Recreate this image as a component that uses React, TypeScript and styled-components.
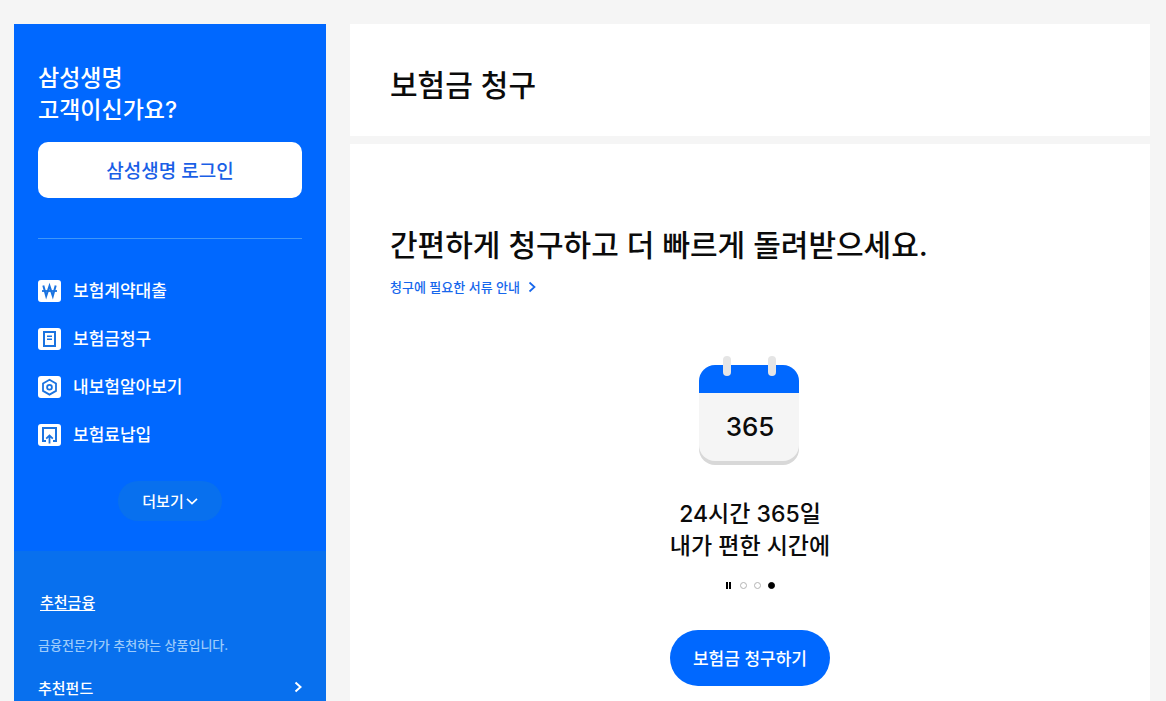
import React from "react";
import styled, { createGlobalStyle } from "styled-components";

const GlobalStyle = createGlobalStyle`
  *, *::before, *::after { box-sizing: border-box; }
  body {
    margin: 0;
    background: #f5f5f5;
    color: #0b0b0b;
    font-family: Inter, "Noto Sans CJK KR", sans-serif;
    font-weight: 500;
  }
  h1, h2, p, ul { margin: 0; padding: 0; font-weight: 500; }
  ul { list-style: none; }
  button { font: inherit; border: 0; padding: 0; cursor: pointer; }
  a { color: inherit; text-decoration: none; }
`;

const Page = styled.div`
  display: flex;
  align-items: stretch;
  gap: 24px;
  min-height: 100vh;
  padding: 24px 16px 0 14px;
`;

const Sidebar = styled.aside`
  flex: 0 0 312px;
  display: flex;
  flex-direction: column;
  background: #0068ff;
  color: #fff;
`;

const MemberArea = styled.section`
  display: flex;
  flex-direction: column;
  padding: 38px 24px 30px;
`;

const Greeting = styled.h2`
  font-size: 23px;
  line-height: 32px;
`;

const LoginButton = styled.button`
  height: 56px;
  margin-top: 16px;
  padding-bottom: 2px;
  border-radius: 10px;
  background: #fff;
  color: #1a5fe6;
  font-size: 19px;
`;

const QuickList = styled.ul`
  margin-top: 40px;
  padding-top: 28px;
  border-top: 1px solid #3f97f8;
`;

const QuickLink = styled.a`
  display: flex;
  align-items: center;
  gap: 12px;
  height: 48px;
  font-size: 17px;
  line-height: 24px;

  svg { flex: none; }
`;

const MoreButton = styled.button`
  display: flex;
  align-items: center;
  justify-content: center;
  gap: 2px;
  align-self: center;
  width: 104px;
  height: 40px;
  margin-top: 22px;
  padding-bottom: 1px;
  border-radius: 20px;
  background: #0870ee;
  color: #fff;
  font-size: 15px;
`;

const Recommend = styled.section`
  flex: 1;
  display: flex;
  flex-direction: column;
  align-items: stretch;
  padding: 40px 24px 0;
  background: #0870ee;
`;

const RecommendTab = styled.a`
  align-self: flex-start;
  margin-left: 2px;
  font-size: 15px;
  line-height: 24px;
  text-decoration: underline;
  text-decoration-thickness: 1px;
  text-underline-offset: 2px;
`;

const RecommendNote = styled.p`
  margin-top: 20px;
  color: #9ccbfb;
  font-size: 13px;
  line-height: 20px;
`;

const RecommendLink = styled.a`
  display: flex;
  align-items: center;
  justify-content: space-between;
  height: 40px;
  margin-top: 12px;
  font-size: 15px;
`;

const Main = styled.main`
  flex: 1;
  min-width: 0;
  display: flex;
  flex-direction: column;
  gap: 8px;
`;

const TitleCard = styled.header`
  padding: 41px 40px 31px;
  background: #fff;
`;

const Heading = styled.h2`
  font-size: 30px;
  line-height: 40px;
`;

const ClaimCard = styled.section`
  flex: 1;
  display: flex;
  flex-direction: column;
  align-items: flex-start;
  padding: 81px 40px 15px;
  background: #fff;
`;

const GuideLink = styled.a`
  display: flex;
  align-items: center;
  gap: 8px;
  margin-top: 12px;
  color: #1767ec;
  font-size: 13px;
  line-height: 20px;
`;

const Slide = styled.div`
  align-self: stretch;
  display: flex;
  flex-direction: column;
  align-items: center;
  margin-top: 59px;
`;

const SlideText = styled.p`
  margin-top: 32px;
  font-size: 23px;
  line-height: 32px;
  text-align: center;
`;

const Pager = styled.div`
  display: flex;
  align-items: center;
  gap: 7px;
  margin-top: 20px;
`;

const PauseButton = styled.button`
  width: 5px;
  height: 7px;
  margin-right: 2px;
  border: solid #000;
  border-width: 0 2px;
  background: none;
`;

const Dot = styled.button<{ $active?: boolean }>`
  width: 7px;
  height: 7px;
  border: 1px solid ${(p) => (p.$active ? "#000" : "#b4b4b4")};
  border-radius: 50%;
  background: ${(p) => (p.$active ? "#000" : "#fff")};
`;

const ClaimButton = styled.button`
  width: 160px;
  height: 56px;
  margin-top: 41px;
  padding-bottom: 2px;
  border-radius: 28px;
  background: #0068ff;
  color: #fff;
  font-size: 17px;
`;

const Tile = ({ children }: { children: React.ReactNode }) => (
  <svg width="23" height="22" viewBox="0 0 23 22" fill="none" aria-hidden="true">
    <rect width="23" height="22" rx="3" fill="#fff" />
    <g stroke="#1a73e0" strokeWidth="2">{children}</g>
  </svg>
);

const WonIcon = () => (
  <Tile>
    <path d="M5.3 5.5 8.2 16 11.5 6 14.8 16 17.7 5.5" />
    <path d="M4 11h15" strokeWidth="1.8" />
  </Tile>
);

const DocumentIcon = () => (
  <Tile>
    <path d="M6 4h11v14H6z" />
    <path d="M9 8.2h5M9 11.2h5" strokeWidth="1.6" />
  </Tile>
);

const HexagonIcon = () => (
  <Tile>
    <path d="M11.5 3.8 18 7.5v7.4l-6.5 3.7L5 14.9V7.5z" strokeWidth="1.8" />
    <circle cx="11.5" cy="11.2" r="2.4" strokeWidth="1.8" />
  </Tile>
);

const PaymentIcon = () => (
  <Tile>
    <path d="M8 17H5V4h13v13h-3" />
    <path d="M11.5 19.5v-8M8.2 14.6l3.3-3.2 3.3 3.2" strokeWidth="1.8" />
  </Tile>
);

const ChevronRight = ({ thick = 1.7 }: { thick?: number }) => (
  <svg width="8" height="12" viewBox="0 0 8 12" fill="none" aria-hidden="true">
    <path d="M1.5 1.5 6.5 6l-5 4.5" stroke="currentColor" strokeWidth={thick} />
  </svg>
);

const ChevronDown = () => (
  <svg width="12" height="8" viewBox="0 0 12 8" fill="none" aria-hidden="true">
    <path d="M1 1.8 6 6.5l5-4.7" stroke="currentColor" strokeWidth="1.7" />
  </svg>
);

const CalendarPicture = () => (
  <svg width="102" height="110" viewBox="0 0 102 110" role="img" aria-label="365">
    <path d="M0 80h100v13a16 16 0 0 1-16 16H16A16 16 0 0 1 0 93z" fill="#d8d8d8" />
    <path d="M0 37h100v52a16 16 0 0 1-16 16H16A16 16 0 0 1 0 89z" fill="#f5f5f5" />
    <path d="M0 37V25A16 16 0 0 1 16 9h68a16 16 0 0 1 16 16v12z" fill="#0068ff" />
    <rect x="24" y="0" width="8" height="20" rx="4" fill="#e5e5e5" />
    <rect x="69" y="0" width="8" height="20" rx="4" fill="#e5e5e5" />
    <text x="51" y="80" fontSize="26" fontWeight="500" textAnchor="middle" fill="#0b0b0b">
      365
    </text>
  </svg>
);

const quickLinks = [
  { label: "보험계약대출", Icon: WonIcon },
  { label: "보험금청구", Icon: DocumentIcon },
  { label: "내보험알아보기", Icon: HexagonIcon },
  { label: "보험료납입", Icon: PaymentIcon },
];

export default function App() {
  return (
    <>
      <GlobalStyle />
      <Page>
        <Sidebar>
          <MemberArea>
            <Greeting>
              삼성생명
              <br />
              고객이신가요?
            </Greeting>
            <LoginButton type="button">삼성생명 로그인</LoginButton>
            <QuickList>
              {quickLinks.map(({ label, Icon }) => (
                <li key={label}>
                  <QuickLink href="#">
                    <Icon />
                    {label}
                  </QuickLink>
                </li>
              ))}
            </QuickList>
            <MoreButton type="button">
              더보기
              <ChevronDown />
            </MoreButton>
          </MemberArea>
          <Recommend>
            <RecommendTab href="#">추천금융</RecommendTab>
            <RecommendNote>금융전문가가 추천하는 상품입니다.</RecommendNote>
            <RecommendLink href="#">
              추천펀드
              <ChevronRight thick={2} />
            </RecommendLink>
          </Recommend>
        </Sidebar>
        <Main>
          <TitleCard>
            <Heading as="h1">보험금 청구</Heading>
          </TitleCard>
          <ClaimCard>
            <Heading>간편하게 청구하고 더 빠르게 돌려받으세요.</Heading>
            <GuideLink href="#">
              청구에 필요한 서류 안내
              <ChevronRight />
            </GuideLink>
            <Slide>
              <CalendarPicture />
              <SlideText>
                24시간 365일
                <br />
                내가 편한 시간에
              </SlideText>
              <Pager>
                <PauseButton type="button" aria-label="일시정지" />
                <Dot type="button" aria-label="1번 슬라이드" />
                <Dot type="button" aria-label="2번 슬라이드" />
                <Dot type="button" aria-label="3번 슬라이드" $active />
              </Pager>
              <ClaimButton type="button">보험금 청구하기</ClaimButton>
            </Slide>
          </ClaimCard>
        </Main>
      </Page>
    </>
  );
}
